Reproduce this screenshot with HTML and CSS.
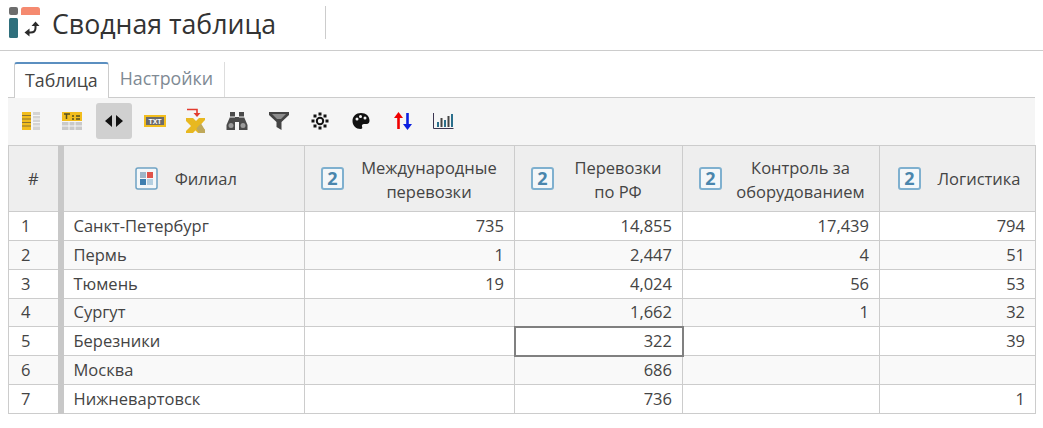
FILE: index.html
```html
<!DOCTYPE html>
<html>
<head>
    <title>Сводная таблица</title>
    <link rel="stylesheet" href="styles.css">
</head>
<body>
    <div class="header">
        <svg class="logo" width="32" height="31" viewBox="0 0 32 31">
            <rect x="0" y="0" width="9" height="8" rx="2" fill="#6d6d6d"/>
            <rect x="0" y="11" width="9" height="20" rx="1.5" fill="#2f6f7c"/>
            <path d="M12 8V2.500Q12 0 14.500 0H28.500Q31 0 31 2.500V8Z" fill="#f58a70"/>
            <path d="M26.500 18V21Q26.500 25.500 21.500 25.500H20" fill="none" stroke="#2b2b2b" stroke-width="2"/>
            <path d="M22.500 19L26.500 14.500L30.500 19Z M20.500 21.500L15.500 25.500L20.500 29.500Z" fill="#2b2b2b"/>
        </svg>
        <h1>Сводная таблица</h1>
        <div class="header-sep"></div>
    </div>

    <div class="tabs">
        <div class="tab active">Таблица</div>
        <div class="tab">Настройки</div>
    </div>

    <div class="toolbar">
        <button class="tool">
            <svg width="20" height="20" viewBox="0 0 20 20">
                <rect x="1" y="1" width="9" height="18" fill="#f2bd1d"/>
                <path d="M1 4.500H10M1 8H10M1 11.500H10M1 15H10" stroke="#8a7430" stroke-width="1"/>
                <rect x="12" y="1" width="7" height="18" fill="#d4d4d4"/>
                <path d="M12 4.500H19M12 8H19M12 11.500H19M12 15H19" stroke="#f5f5f5" stroke-width="1"/>
            </svg>
        </button>
        <button class="tool">
            <svg width="20" height="20" viewBox="0 0 20 20">
                <rect x="0" y="1" width="20" height="9" fill="#f2bd1d"/>
                <path d="M2 3H8M4.500 3V8M10 5H12M14 5H18M10 8H12M14 8H18" stroke="#55501f" stroke-width="1.500"/>
                <rect x="0" y="11" width="20" height="8" fill="#c9c9c9"/>
                <path d="M0 15H20M7 11V19M13 11V19" stroke="#f5f5f5" stroke-width="1"/>
            </svg>
        </button>
        <button class="tool selected">
            <svg width="20" height="20" viewBox="0 0 20 20">
                <path d="M8 4V16L1 10Z M12 4V16L19 10Z" fill="#111"/>
            </svg>
        </button>
        <button class="tool">
            <svg width="22" height="20" viewBox="0 0 22 20">
                <rect x="0" y="4" width="22" height="12" fill="#f2bd1d"/>
                <rect x="2" y="6" width="18" height="8" fill="#6b6b6b"/>
                <text x="11" y="12.600" class="txt-icon">TXT</text>
            </svg>
        </button>
        <button class="tool">
            <svg width="20" height="26" viewBox="0 0 20 26">
                <path d="M1 1.500H11V6" fill="none" stroke="#e23b2e" stroke-width="1.600"/>
                <path d="M7.500 5H14.500L11 9Z" fill="#e23b2e"/>
                <path d="M0 10H7L19 22V25H12L0 13Z" fill="#e8b820"/>
                <path d="M19 10V12L7 25H0V23L13 10Z" fill="#e8b820"/>
                <path d="M12.500 18L15 15.500L19 22V25H13L10.500 20.500Z" fill="#bfa85a"/>
            </svg>
        </button>
        <button class="tool">
            <svg width="22" height="20" viewBox="0 0 22 20">
                <path d="M4 1H9V6H13V1H18V6L21.500 14V19H13V11H9V19H0.500V14L4 6Z" fill="#4a4a4a"/>
                <path d="M4 6H9M13 6H18" stroke="#f5f5f5" stroke-width="1"/>
                <circle cx="5" cy="14.500" r="2.500" fill="#9a9a9a"/>
                <circle cx="17" cy="14.500" r="2.500" fill="#9a9a9a"/>
            </svg>
        </button>
        <button class="tool">
            <svg width="20" height="20" viewBox="0 0 20 20">
                <path d="M0 1H20V4L12.500 11V19L7.500 16V11L0 4Z" fill="#444"/>
                <path d="M3 3H17L12 8H8Z" fill="#8c8c8c"/>
            </svg>
        </button>
        <button class="tool">
            <svg width="20" height="20" viewBox="0 0 20 20">
                <circle cx="10" cy="10" r="3.200" fill="none" stroke="#111" stroke-width="2"/>
                <g fill="#111">
                    <rect x="8.500" y="1.500" width="3" height="3"/>
                    <rect x="8.500" y="15.500" width="3" height="3"/>
                    <rect x="1.500" y="8.500" width="3" height="3"/>
                    <rect x="15.500" y="8.500" width="3" height="3"/>
                    <rect x="3.500" y="3.500" width="3" height="3"/>
                    <rect x="13.500" y="3.500" width="3" height="3"/>
                    <rect x="3.500" y="13.500" width="3" height="3"/>
                    <rect x="13.500" y="13.500" width="3" height="3"/>
                </g>
            </svg>
        </button>
        <button class="tool">
            <svg width="20" height="20" viewBox="0 0 20 20">
                <path d="M10 2C5 2 1.500 5.500 1.500 10C1.500 14.500 5 18 9.500 18C11.500 18 11.500 16.500 11 15.500C10.500 14 11.500 13 13 13H15.500C17.500 13 18.500 11.500 18.500 9.500C18.500 5 15 2 10 2Z" fill="#111"/>
                <circle cx="6" cy="8" r="1.500" fill="#f5f5f5"/>
                <circle cx="9.500" cy="5.500" r="1.500" fill="#f5f5f5"/>
                <circle cx="14" cy="7" r="1.500" fill="#f5f5f5"/>
            </svg>
        </button>
        <button class="tool">
            <svg width="20" height="20" viewBox="0 0 20 20">
                <path d="M5.500 18V5" stroke="#f00000" stroke-width="2.600"/>
                <path d="M1 7L5.500 1L10 7Z" fill="#f00000"/>
                <path d="M14.500 2V15" stroke="#0a1fe0" stroke-width="2.600"/>
                <path d="M10 13L14.500 19L19 13Z" fill="#0a1fe0"/>
            </svg>
        </button>
        <button class="tool">
            <svg width="21" height="20" viewBox="0 0 21 20">
                <path d="M0.500 2V17.500H20.500" fill="none" stroke="#3a3550" stroke-width="1"/>
                <rect x="4" y="11" width="2" height="5" fill="#2b6f8c"/>
                <rect x="7.500" y="7" width="2" height="9" fill="#444"/>
                <rect x="11" y="9" width="2" height="7" fill="#2b6f8c"/>
                <rect x="14.500" y="5" width="2" height="11" fill="#444"/>
                <rect x="18" y="3" width="2" height="13" fill="#2b6f8c"/>
            </svg>
        </button>
    </div>

    <table class="pivot">
        <colgroup>
            <col class="col-num">
            <col class="col-branch">
            <col class="col-intl">
            <col class="col-rf">
            <col class="col-ctrl">
            <col class="col-log">
        </colgroup>
        <thead>
            <tr>
                <th>#</th>
                <th class="branch">
                    <div class="head-cell head-branch">
                        <svg class="dim-icon" width="23" height="23" viewBox="0 0 23 23">
                            <rect x="1" y="1" width="21" height="21" rx="2" fill="#f4f7f9" stroke="#6fa3c4" stroke-width="1.500"/>
                            <rect x="5" y="5" width="6" height="6" fill="#9fb6c8"/>
                            <rect x="12" y="5" width="6" height="6" fill="#e0534a"/>
                            <rect x="5" y="12" width="6" height="6" fill="#3f7fb0"/>
                            <rect x="12" y="12" width="6" height="6" fill="#b5cfe0"/>
                        </svg>
                        <span>Филиал</span>
                    </div>
                </th>
                <th>
                    <div class="head-cell">
                        <span class="level">2</span>
                        <span class="head-text">Международные<br>перевозки</span>
                    </div>
                </th>
                <th>
                    <div class="head-cell">
                        <span class="level">2</span>
                        <span class="head-text">Перевозки<br>по РФ</span>
                    </div>
                </th>
                <th>
                    <div class="head-cell">
                        <span class="level">2</span>
                        <span class="head-text">Контроль за<br>оборудованием</span>
                    </div>
                </th>
                <th>
                    <div class="head-cell head-last">
                        <span class="level">2</span>
                        <span class="head-text">Логистика</span>
                    </div>
                </th>
            </tr>
        </thead>
        <tbody>
            <tr><td>1</td><td class="branch">Санкт-Петербург</td><td class="val">735</td><td class="val">14,855</td><td class="val">17,439</td><td class="val">794</td></tr>
            <tr><td>2</td><td class="branch">Пермь</td><td class="val">1</td><td class="val">2,447</td><td class="val">4</td><td class="val">51</td></tr>
            <tr><td>3</td><td class="branch">Тюмень</td><td class="val">19</td><td class="val">4,024</td><td class="val">56</td><td class="val">53</td></tr>
            <tr><td>4</td><td class="branch">Сургут</td><td class="val"></td><td class="val">1,662</td><td class="val">1</td><td class="val">32</td></tr>
            <tr><td>5</td><td class="branch">Березники</td><td class="val"></td><td class="val current">322</td><td class="val"></td><td class="val">39</td></tr>
            <tr><td>6</td><td class="branch">Москва</td><td class="val"></td><td class="val">686</td><td class="val"></td><td class="val"></td></tr>
            <tr><td>7</td><td class="branch">Нижневартовск</td><td class="val"></td><td class="val">736</td><td class="val"></td><td class="val">1</td></tr>
        </tbody>
    </table>
</body>
</html>
```

FILE: styles.css
```css
body {
    font-family: "Open Sans", sans-serif;
    color: #444;
    margin: 0;
    background-color: #fff;
}
.header {
    display: flex;
    align-items: center;
    height: 50px;
    padding-left: 9px;
    border-bottom: 1px solid #ccc;
}
.logo {
    margin-top: -5px;
    flex: none;
}
.header h1 {
    font-size: 26.700px;
    font-weight: 400;
    color: #333;
    margin: -3px 0 0 11px;
    width: 273px;
    white-space: nowrap;
}
.header-sep {
    width: 1px;
    height: 33px;
    margin-top: -6px;
    background-color: #ccc;
}
.tabs {
    display: flex;
    margin: 11px 0 0 14px;
    height: 35px;
}
.tab {
    font-size: 17.800px;
    line-height: 33px;
    padding: 0 11px;
    color: #808a94;
    border-right: 1px solid #ddd;
}
.tab.active {
    padding: 0 10px;
    color: #444;
    background-color: #fff;
    border: 1px solid #ccc;
    border-top: 2px solid #5b8fc0;
    border-bottom: none;
    border-radius: 3px 3px 0 0;
    position: relative;
    z-index: 1;
    height: 34px;
}
.toolbar {
    display: flex;
    align-items: center;
    gap: 5.300px;
    height: 45px;
    margin: 0 8px;
    padding: 0 0 2px 5px;
    background-color: #f5f5f5;
    border-top: 1px solid #ccc;
}
.tool {
    width: 36px;
    height: 36px;
    padding: 0;
    display: flex;
    flex: none;
    align-items: center;
    justify-content: center;
    border: none;
    border-radius: 3px;
    background: none;
}
.tool.selected {
    background-color: #d0d0d0;
}
.txt-icon {
    font-family: "Liberation Sans", sans-serif;
    font-size: 7px;
    font-weight: 700;
    fill: #fff;
    text-anchor: middle;
}
.pivot {
    border-collapse: collapse;
    table-layout: fixed;
    width: 1027px;
    margin-left: 8px;
    font-size: 16.500px;
}
.col-num { width: 52px; }
.col-branch { width: 244px; }
.col-intl { width: 210px; }
.col-rf { width: 168px; }
.col-ctrl { width: 197px; }
.col-log { width: 156px; }
th, td {
    border: 1px solid #ccc;
    font-weight: 400;
}
th {
    height: 65px;
    padding: 0;
    background-color: #eee;
    line-height: 24px;
}
td {
    height: 27.850px;
    padding: 0 10px 0 12px;
    line-height: 20px;
}
tbody tr:nth-child(even) td {
    background-color: #f9f9f9;
}
.branch {
    border-left: 6px solid #c8c8c8;
}
td.branch {
    padding-left: 10px;
}
.val {
    text-align: right;
}
td.current {
    outline: 2px solid #808080;
    outline-offset: -1px;
    background-color: #fff;
}
.head-cell {
    display: flex;
    align-items: center;
    padding-left: 16px;
}
.head-last {
    padding-left: 18px;
}
.head-last .head-text {
    padding: 0 0 0 2px;
}
.head-branch {
    justify-content: center;
    gap: 17px;
    padding: 0 0 0 4px;
}
.dim-icon {
    flex: none;
}
.level {
    flex: none;
    box-sizing: border-box;
    width: 23px;
    height: 23px;
    border: 2px solid #7fb0cf;
    border-radius: 3px;
    background-color: #f4f7f9;
    color: #4a86ad;
    font-size: 18px;
    font-weight: 700;
    line-height: 19px;
    text-align: center;
}
.head-text {
    flex: 1;
    text-align: center;
    padding-top: 2px;
}
```
